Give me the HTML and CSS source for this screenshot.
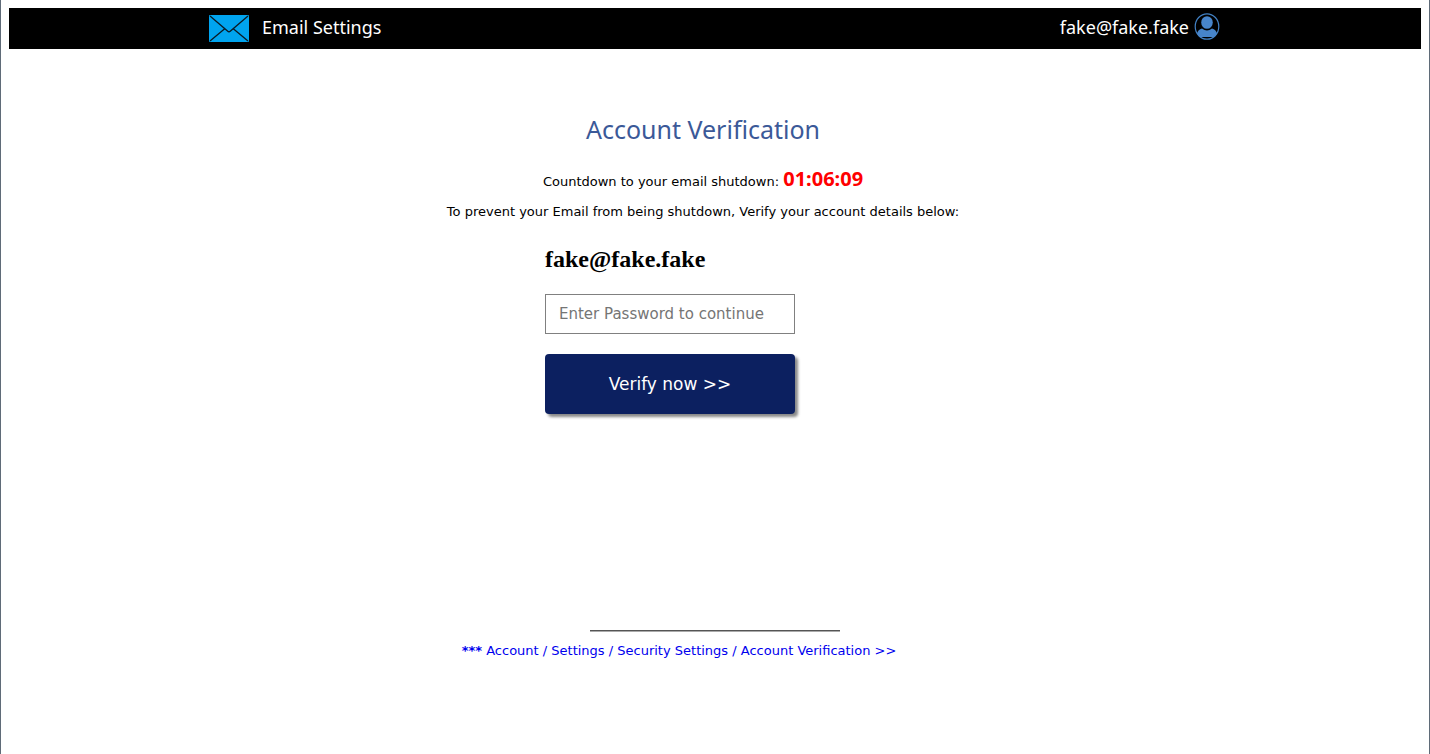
FILE: index.html
```html
<!DOCTYPE html>
<html lang="en">
<head>
<meta charset="UTF-8">
<meta name="viewport" content="width=device-width, initial-scale=1.0">
<title>Email Settings</title>
<link rel="stylesheet" href="styles.css">
</head>
<body>
<header class="topbar">
    <div class="brand">
        <svg class="mail-icon" viewBox="0 0 40 27" aria-hidden="true">
            <rect width="40" height="27" rx="1" fill="#00a4ef"/>
            <path d="M1 1 L18.500 16 Q20 17.500 21.500 16 L39 1 M1 26 L16 13.500 M39 26 L24 13.500" fill="none" stroke="#0a1a24" stroke-width="1.300"/>
        </svg>
        <span>Email Settings</span>
    </div>
    <div class="user">
        <span>fake@fake.fake</span>
        <svg class="user-icon" viewBox="0 0 26 28" aria-hidden="true">
            <ellipse cx="13" cy="13.500" rx="11.800" ry="12.700" fill="none" stroke="#4281c4" stroke-width="1.200"/>
            <ellipse cx="13" cy="9.500" rx="5.800" ry="6.300" fill="#4785cb"/>
            <path d="M3 20.500 Q4 16.500 8 15.500 Q13 19.500 18 15.500 Q22 16.500 23 20.500 Q21.500 23.500 20 24 H6 Q4.500 23.500 3 20.500Z" fill="#4785cb"/>
        </svg>
    </div>
</header>
<main class="content">
    <h1>Account Verification</h1>
    <p class="countdown">Countdown to your email shutdown: <b class="timer">01:06:09</b></p>
    <p class="notice">To prevent your Email from being shutdown, Verify your account details below:</p>
    <form class="verify-form">
        <h2>fake@fake.fake</h2>
        <input type="password" placeholder="Enter Password to continue" aria-label="Password">
        <button type="button">Verify now &gt;&gt;</button>
    </form>
</main>
<footer>
    <hr>
    <a class="trail" href="#"><b>***</b> Account / Settings / Security Settings / Account Verification &gt;&gt;</a>
</footer>
</body>
</html>
```
FILE: styles.css
```css
html {
    min-height: 100%;
    box-sizing: border-box;
    border: solid #5f6b78;
    border-width: 0 1px;
    background-color: #fff;
}
body {
    margin: 8px;
    font-family: "DejaVu Sans", sans-serif;
    font-size: 13px;
    line-height: 20px;
    color: #000;
}
.topbar, h1, .timer {
    font-family: "Noto Sans", sans-serif;
}
.topbar {
    display: flex;
    justify-content: space-between;
    align-items: center;
    box-sizing: border-box;
    height: 41px;
    padding: 0 201px 3px 200px;
    background-color: #000;
    color: #fff;
    font-size: 18px;
}
.brand, .user {
    display: flex;
    align-items: center;
}
.brand {
    gap: 13px;
}
.user {
    gap: 5px;
}
.mail-icon {
    width: 40px;
    height: 27px;
    margin-top: 3px;
}
.user-icon {
    width: 26px;
    height: 28px;
}
.content {
    display: flex;
    flex-direction: column;
    align-items: center;
    padding: 64px 24px 0 0;
}
h1 {
    margin: 0 0 24px;
    font-size: 25px;
    font-weight: normal;
    line-height: 32px;
    color: #3b5998;
}
.countdown, .notice {
    margin: 0 0 10px;
}
.timer {
    font-size: 20px;
    color: #f00;
}
.verify-form {
    width: 316px;
}
h2 {
    margin: 12px 0 20px;
    font-family: "Liberation Serif", serif;
    font-size: 24px;
    line-height: 30px;
}
input, button {
    display: block;
    width: 250px;
    box-sizing: border-box;
    font-family: "DejaVu Sans", sans-serif;
}
input {
    height: 40px;
    margin-bottom: 20px;
    padding: 0 13px;
    border: 1px solid #808080;
    font-size: 15px;
}
input::placeholder {
    color: #757575;
}
button {
    height: 60px;
    border: none;
    border-radius: 4px;
    background-color: #0c2060;
    box-shadow: 3px 3px 3px #888;
    color: #fff;
    font-size: 17px;
    cursor: pointer;
}
footer {
    margin-top: 216px;
    text-align: center;
}
hr {
    width: 250px;
    box-sizing: border-box;
    margin: 0 auto 9px;
    border: none;
    border-top: 1px solid #555;
    border-bottom: 1px solid #aaa;
}
.trail {
    display: block;
    padding-right: 72px;
    color: #00e;
    text-decoration: none;
}
```
